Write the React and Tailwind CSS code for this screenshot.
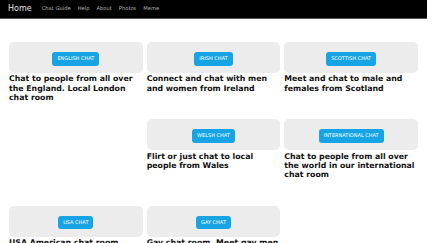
import React from "react";

const links = ["Chat Guide", "Help", "About", "Photos", "Meme"];

const rooms = [
  {
    label: "ENGLISH CHAT",
    text: "Chat to people from all over the England. Local London chat room",
    cls: "row-span-2",
  },
  { label: "IRISH CHAT", text: "Connect and chat with men and women from Ireland" },
  { label: "SCOTTISH CHAT", text: "Meet and chat to male and females from Scotland" },
  {
    label: "WELSH CHAT",
    text: "Flirt or just chat to local people from Wales",
    cls: "col-start-2",
  },
  {
    label: "INTERNATIONAL CHAT",
    text: "Chat to people from all over the world in our international chat room",
  },
  { label: "USA CHAT", text: "USA American chat room", cls: "col-start-1" },
  { label: "GAY CHAT", text: "Gay chat room. Meet gay men from all over" },
];

const RoomCard = ({ label, text, cls }) => (
  <div className={`px-[2px] pt-[7px] pb-[19.5px] ${cls || ""}`}>
    <div className="flex h-[31px] justify-center rounded-[5px] bg-[#ececec] pt-[10px]">
      <button className="flex h-[13.5px] items-center rounded-[3px] bg-[#16a4e5] px-[5px] text-[5px] text-white">
        {label}
      </button>
    </div>
    <h3 className="mt-[1.4px] text-[7.8px] font-bold leading-[9.2px] text-[#111]">
      {text}
    </h3>
  </div>
);

export default function App() {
  return (
    <div
      className="h-[243px] w-[427px] overflow-hidden bg-white"
      style={{ fontFamily: "'DejaVu Sans', sans-serif" }}
    >
      <nav className="flex h-[19px] items-center border-b border-[#555] bg-black px-[8px]">
        <span className="mr-[10px] text-[8px] text-[#e5e5e5]">Home</span>
        <div className="flex gap-[7px]">
          {links.map((l) => (
            <a key={l} className="text-[5.2px] text-[#b5b5b5]">
              {l}
            </a>
          ))}
        </div>
      </nav>

      <div className="grid grid-cols-3 items-start px-[7px] pt-[16px]">
        {rooms.map((r) => (
          <RoomCard key={r.label} {...r} />
        ))}
      </div>
    </div>
  );
}
